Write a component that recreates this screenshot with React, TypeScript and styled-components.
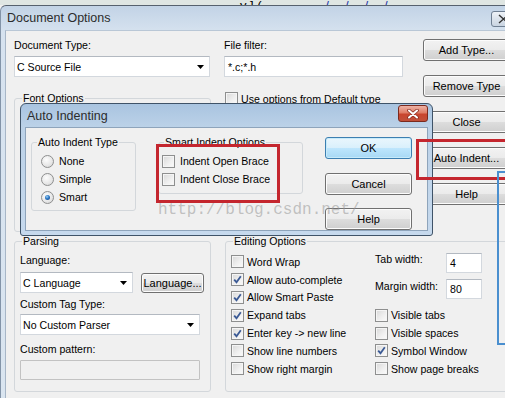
import styled, { createGlobalStyle } from "styled-components";

const GlobalStyle = createGlobalStyle`
  html,
  body {
    margin: 0;
    padding: 0;
    background: #f0f0f0;
    overflow: hidden;
  }

  body {
    color: #000;
    font-family: "Liberation Sans", Arial, sans-serif;
    font-size: 10.6px;
  }
`;

const Screen = styled.div`
  background: #f0f0f0;
  height: 398px;
  overflow: hidden;
  position: relative;
  width: 505px;
`;

const TopStrip = styled.div`
  background: #dfe6e3;
  height: 5px;
  overflow: hidden;
  padding-left: 240px;
  white-space: nowrap;
`;

const StripText = styled.span`
  display: inline-block;
  font-size: 13px;
  line-height: 13px;
  margin-top: -9px;

  b {
    color: #2233aa;
    font-weight: normal;
    letter-spacing: 16px;
    margin-left: 60px;
  }
`;

const Window = styled.div`
  background: linear-gradient(180deg, #c2d3e6 0px, #d6e2ef 26px, #dae5f0 100%);
  border-left: 1px solid #8394a8;
  border-radius: 6px 0 0 0;
  border-top: 1px solid #56616e;
  display: flex;
  flex-direction: column;
  height: 393px;
  padding-left: 4px;
`;

const TitleBar = styled.div`
  align-items: center;
  display: flex;
  height: 24px;
  padding-left: 2px;
`;

const TitleText = styled.span<{ $size: number }>`
  color: #2c2c2c;
  font-size: ${(p) => p.$size}px;
`;

const GrayClose = styled.div`
  align-self: flex-start;
  background: linear-gradient(180deg, #eef2f7, #c9d4e1);
  border: 1px solid #6f7f92;
  border-radius: 3px;
  box-sizing: border-box;
  height: 16px;
  margin: 5px -14px 0 auto;
  padding: 2px 0 0 6px;
  width: 28px;
`;

const Body = styled.div`
  background: #f0f0f0;
  border-left: 1px solid #a7b6c7;
  border-top: 1px solid #b9c7d6;
  flex: 1;
  padding: 8px 0 0 8px;
`;

const TopArea = styled.div`
  display: flex;
`;

const LeftFields = styled.div`
  flex: none;
  width: 409px;
`;

const FieldRow = styled.div`
  display: flex;
  gap: 14px;
`;

const Field = styled.div<{ $width: number }>`
  width: ${(p) => p.$width}px;
`;

const FieldLabel = styled.div<{ $above?: number; $below?: number }>`
  line-height: 13px;
  margin-bottom: ${(p) => p.$below ?? 4}px;
  margin-top: ${(p) => p.$above ?? 0}px;
  white-space: nowrap;
`;

const Select = styled.div<{ $width: number }>`
  align-items: center;
  background: #fff;
  border: 1px solid #d3d8de;
  border-top-color: #b3b9c1;
  box-sizing: border-box;
  display: flex;
  height: 21px;
  padding-left: 2px;
  white-space: nowrap;
  width: ${(p) => p.$width}px;
`;

const Arrow = styled.svg`
  flex: none;
  margin-left: auto;
  margin-right: 5px;
`;

const TextBox = styled.div<{ $width: number; $height: number }>`
  align-items: center;
  background: #fff;
  border: 1px solid #d3d8de;
  border-top-color: #b3b9c1;
  box-sizing: border-box;
  display: flex;
  height: ${(p) => p.$height}px;
  padding-left: 3px;
  width: ${(p) => p.$width}px;
`;

const DisabledBox = styled.div`
  background: #f0f0f0;
  border: 1px solid #c2c2c2;
  border-radius: 1px;
  box-sizing: border-box;
  height: 20px;
  width: 180px;
`;

const GroupRow = styled.div`
  align-items: flex-start;
  display: flex;
  margin-top: 15px;
`;

const Group = styled.fieldset<{
  $width: number;
  $height: number;
  $pad: string;
}>`
  border: 1px solid #d3d7db;
  border-radius: 3px;
  box-sizing: border-box;
  flex: none;
  height: ${(p) => p.$height}px;
  margin: 0;
  min-width: 0;
  padding: ${(p) => p.$pad};
  width: ${(p) => p.$width}px;
`;

const Legend = styled.legend<{ $shift?: number }>`
  line-height: 13px;
  margin-left: ${(p) => p.$shift ?? 2}px;
  padding: 0 1px;
  white-space: nowrap;
`;

const ButtonColumn = styled.div<{ $gap: number; $top?: number }>`
  display: flex;
  flex: none;
  flex-direction: column;
  gap: ${(p) => p.$gap}px;
  margin-top: ${(p) => p.$top ?? 0}px;
`;

const Button = styled.div<{ $width: number; $height: number; $default?: boolean }>`
  align-items: center;
  background: ${(p) =>
    p.$default
      ? "linear-gradient(180deg, #eaf6fd 0%, #d9f0fc 50%, #bee6fd 51%, #a7d9f5 100%)"
      : "linear-gradient(180deg, #f2f2f2 0%, #ebebeb 50%, #dddddd 51%, #cfcfcf 100%)"};
  border: 1px solid ${(p) => (p.$default ? "#3c7fb1" : "#707070")};
  border-radius: 3px;
  box-shadow: inset 0 0 0 1px ${(p) => (p.$default ? "#c7ebfa" : "#fcfcfc")};
  box-sizing: border-box;
  display: flex;
  flex: none;
  font-size: 11px;
  height: ${(p) => p.$height}px;
  justify-content: center;
  white-space: nowrap;
  width: ${(p) => p.$width}px;
`;

const CheckRow = styled.div<{ $above?: number }>`
  align-items: center;
  display: flex;
  gap: 3px;
  height: 17.8px;
  margin-top: ${(p) => p.$above ?? 0}px;
  white-space: nowrap;
`;

const Box = styled.span`
  align-items: center;
  background: linear-gradient(135deg, #d8d8d8 0%, #f0f0f0 60%, #fbfbfb 100%);
  border: 1px solid #8e8f8f;
  box-shadow: inset 0 0 0 1px #f5f5f5;
  box-sizing: border-box;
  display: flex;
  flex: none;
  height: 13px;
  justify-content: center;
  width: 13px;
`;

const RadioRing = styled.span`
  align-items: center;
  background: radial-gradient(circle at 40% 35%, #fdfdfd 0%, #e6e6e6 60%, #cfcfcf 100%);
  border: 1px solid #8e8f8f;
  border-radius: 50%;
  box-sizing: border-box;
  display: flex;
  flex: none;
  height: 13px;
  justify-content: center;
  width: 13px;
`;

const RadioDot = styled.span`
  background: radial-gradient(circle at 40% 35%, #9fd1f5 0%, #2a77c4 45%, #173d79 100%);
  border-radius: 50%;
  height: 5px;
  width: 5px;
`;

const RadioRow = styled.div`
  align-items: center;
  display: flex;
  gap: 5px;
  height: 18px;
  white-space: nowrap;
`;

const BottomArea = styled.div`
  display: flex;
  gap: 14px;
  margin-top: 3px;
`;

const LangRow = styled.div`
  align-items: flex-start;
  display: flex;
  gap: 8px;

  & > :last-child {
    margin-top: 1px;
  }
`;

const EditGrid = styled.div`
  display: flex;
`;

const CheckColumn = styled.div`
  flex: none;
  width: 144px;
`;

const SizeBlock = styled.div`
  display: flex;
  flex-direction: column;
  gap: 6px;
  height: 53.4px;
`;

const SizeRow = styled.div<{ $labelTop: number }>`
  align-items: flex-start;
  display: flex;

  span {
    margin-top: ${(p) => p.$labelTop}px;
    width: 71px;
    white-space: nowrap;
    line-height: 13px;
  }
`;

const Dialog = styled.div`
  background: linear-gradient(180deg, #a9c4e0 0%, #bcd2e8 18%, #c6d9ed 100%);
  border: 1px solid #3f5368;
  border-radius: 6px 6px 3px 3px;
  box-sizing: border-box;
  display: flex;
  flex-direction: column;
  height: 133px;
  left: 20px;
  padding: 0 4px 4px;
  position: absolute;
  top: 103px;
  width: 413px;
`;

const DialogTitle = styled.div`
  align-items: center;
  display: flex;
  height: 23px;
  padding-left: 2px;
`;

const RedClose = styled.div`
  align-items: center;
  align-self: flex-start;
  background: linear-gradient(180deg, #eeb3a6 0%, #df7d66 45%, #c9452e 55%, #c0503a 100%);
  border: 1px solid #7b2a1e;
  border-radius: 3px;
  box-sizing: border-box;
  display: flex;
  height: 17px;
  justify-content: center;
  margin: 1px 0 0 auto;
  width: 30px;
`;

const DialogBody = styled.div`
  align-items: flex-start;
  background: #f0f0f0;
  border: 1px solid #8ea4bb;
  display: flex;
  flex: 1;
  gap: 22px;
  padding: 8px 0 0 5px;
`;

const Watermark = styled.div`
  color: rgba(150, 150, 150, 0.55);
  font-family: "Liberation Mono", "Courier New", monospace;
  font-size: 16px;
  left: 158px;
  line-height: 18px;
  position: absolute;
  top: 201px;
`;

const Marker = styled.div<{ $color: string; $width: number }>`
  border: ${(p) => p.$width}px solid ${(p) => p.$color};
  box-sizing: border-box;
  position: absolute;
`;

const Check = ({ on }: { on?: boolean }) => (
  <Box>
    {on && (
      <svg width="9" height="9" viewBox="0 0 9 9">
        <path
          d="M1.2 4.6 L3.5 7.2 L7.8 1.2"
          fill="none"
          stroke="#3b5a95"
          strokeWidth="1.8"
        />
      </svg>
    )}
  </Box>
);

const DropArrow = () => (
  <Arrow width="7" height="4" viewBox="0 0 7 4">
    <polygon points="0,0 7,0 3.5,4" fill="#000" />
  </Arrow>
);

const CheckItem = ({ label, on }: { label: string; on?: boolean }) => (
  <CheckRow>
    <Check on={on} />
    {label}
  </CheckRow>
);

const RadioItem = ({ label, on }: { label: string; on?: boolean }) => (
  <RadioRow>
    <RadioRing>{on && <RadioDot />}</RadioRing>
    {label}
  </RadioRow>
);

export default function App() {
  return (
    <Screen>
      <GlobalStyle />
      <TopStrip>
        <StripText>
          y ] ( <b>////</b>
        </StripText>
      </TopStrip>
      <Window>
        <TitleBar>
          <TitleText $size={12.5}>Document Options</TitleText>
          <GrayClose>
            <svg width="12" height="10" viewBox="0 0 12 10">
              <path d="M1 1 L10 9 M10 1 L1 9" stroke="#333" strokeWidth="1.4" />
            </svg>
          </GrayClose>
        </TitleBar>
        <Body>
          <TopArea>
            <LeftFields>
              <FieldRow>
                <Field $width={196}>
                  <FieldLabel>Document Type:</FieldLabel>
                  <Select $width={196}>
                    C Source File
                    <DropArrow />
                  </Select>
                </Field>
                <Field $width={179}>
                  <FieldLabel>File filter:</FieldLabel>
                  <TextBox $width={179} $height={21}>
                    *.c;*.h
                  </TextBox>
                </Field>
              </FieldRow>
              <GroupRow>
                <Group $width={197} $height={140} $pad="4px 5px">
                  <Legend>Font Options</Legend>
                </Group>
                <CheckRow $above={-2} style={{ marginLeft: 14 }}>
                  <Check />
                  Use options from Default type
                </CheckRow>
              </GroupRow>
            </LeftFields>
            <ButtonColumn $gap={14}>
              <Button $width={87} $height={22}>Add Type...</Button>
              <Button $width={87} $height={22}>Remove Type</Button>
              <Button $width={87} $height={22}>Close</Button>
              <Button $width={87} $height={22}>Auto Indent...</Button>
              <Button $width={87} $height={22}>Help</Button>
            </ButtonColumn>
          </TopArea>
          <BottomArea>
            <Group $width={197} $height={157} $pad="6px 5px 5px">
              <Legend>Parsing</Legend>
              <FieldLabel $below={5}>Language:</FieldLabel>
              <LangRow>
                <Select $width={113}>
                  C Language
                  <DropArrow />
                </Select>
                <Button $width={63} $height={20}>Language...</Button>
              </LangRow>
              <FieldLabel $above={5} $below={3}>
                Custom Tag Type:
              </FieldLabel>
              <Select $width={180}>
                No Custom Parser
                <DropArrow />
              </Select>
              <FieldLabel $above={8} $below={4}>
                Custom pattern:
              </FieldLabel>
              <DisabledBox />
            </Group>
            <Group $width={300} $height={157} $pad="5px 5px 5px">
              <Legend>Editing Options</Legend>
              <EditGrid>
                <CheckColumn>
                  <CheckItem label="Word Wrap" />
                  <CheckItem label="Allow auto-complete" on />
                  <CheckItem label="Allow Smart Paste" on />
                  <CheckItem label="Expand tabs" on />
                  <CheckItem label="Enter key -> new line" on />
                  <CheckItem label="Show line numbers" />
                  <CheckItem label="Show right margin" />
                </CheckColumn>
                <div>
                  <SizeBlock>
                    <SizeRow $labelTop={0}>
                      <span>Tab width:</span>
                      <TextBox $width={36} $height={20}>
                        4
                      </TextBox>
                    </SizeRow>
                    <SizeRow $labelTop={1}>
                      <span>Margin width:</span>
                      <TextBox $width={36} $height={20}>
                        80
                      </TextBox>
                    </SizeRow>
                  </SizeBlock>
                  <CheckItem label="Visible tabs" />
                  <CheckItem label="Visible spaces" />
                  <CheckItem label="Symbol Window" on />
                  <CheckItem label="Show page breaks" />
                </div>
              </EditGrid>
            </Group>
          </BottomArea>
        </Body>
      </Window>

      <Dialog>
        <DialogTitle>
          <TitleText $size={12.5}>Auto Indenting</TitleText>
          <RedClose>
            <svg width="14" height="10" viewBox="0 0 14 10">
              <path
                d="M3 1.5 L11 8.5 M11 1.5 L3 8.5"
                stroke="#8a2e22"
                strokeWidth="3.6"
                strokeLinecap="round"
              />
              <path
                d="M3 1.5 L11 8.5 M11 1.5 L3 8.5"
                stroke="#fff"
                strokeWidth="2"
                strokeLinecap="round"
              />
            </svg>
          </RedClose>
        </DialogTitle>
        <DialogBody>
          <Group $width={105} $height={75} $pad="3px 5px 5px 9px">
            <Legend $shift={-4}>Auto Indent Type</Legend>
            <RadioItem label="None" />
            <RadioItem label="Simple" />
            <RadioItem label="Smart" on />
          </Group>
          <Group $width={145} $height={58} $pad="3px 3px 5px">
            <Legend>Smart Indent Options</Legend>
            <RadioRow>
              <Check />
              Indent Open Brace
            </RadioRow>
            <RadioRow>
              <Check />
              Indent Close Brace
            </RadioRow>
          </Group>
          <ButtonColumn $gap={13.5} $top={1}>
            <Button $width={87} $height={22} $default>
              OK
            </Button>
            <Button $width={87} $height={22}>Cancel</Button>
            <Button $width={87} $height={22}>Help</Button>
          </ButtonColumn>
        </DialogBody>
      </Dialog>

      <Watermark>http://blog.csdn.net/</Watermark>

      <Marker
        $color="#c4262e"
        $width={3}
        style={{ left: 156, top: 144, width: 124, height: 59 }}
      />
      <Marker
        $color="#c4262e"
        $width={3}
        style={{ left: 416, top: 139, width: 100, height: 41 }}
      />
      <Marker
        $color="#4a8fcf"
        $width={2}
        style={{ left: 497, top: 171, width: 30, height: 174 }}
      />
    </Screen>
  );
}
